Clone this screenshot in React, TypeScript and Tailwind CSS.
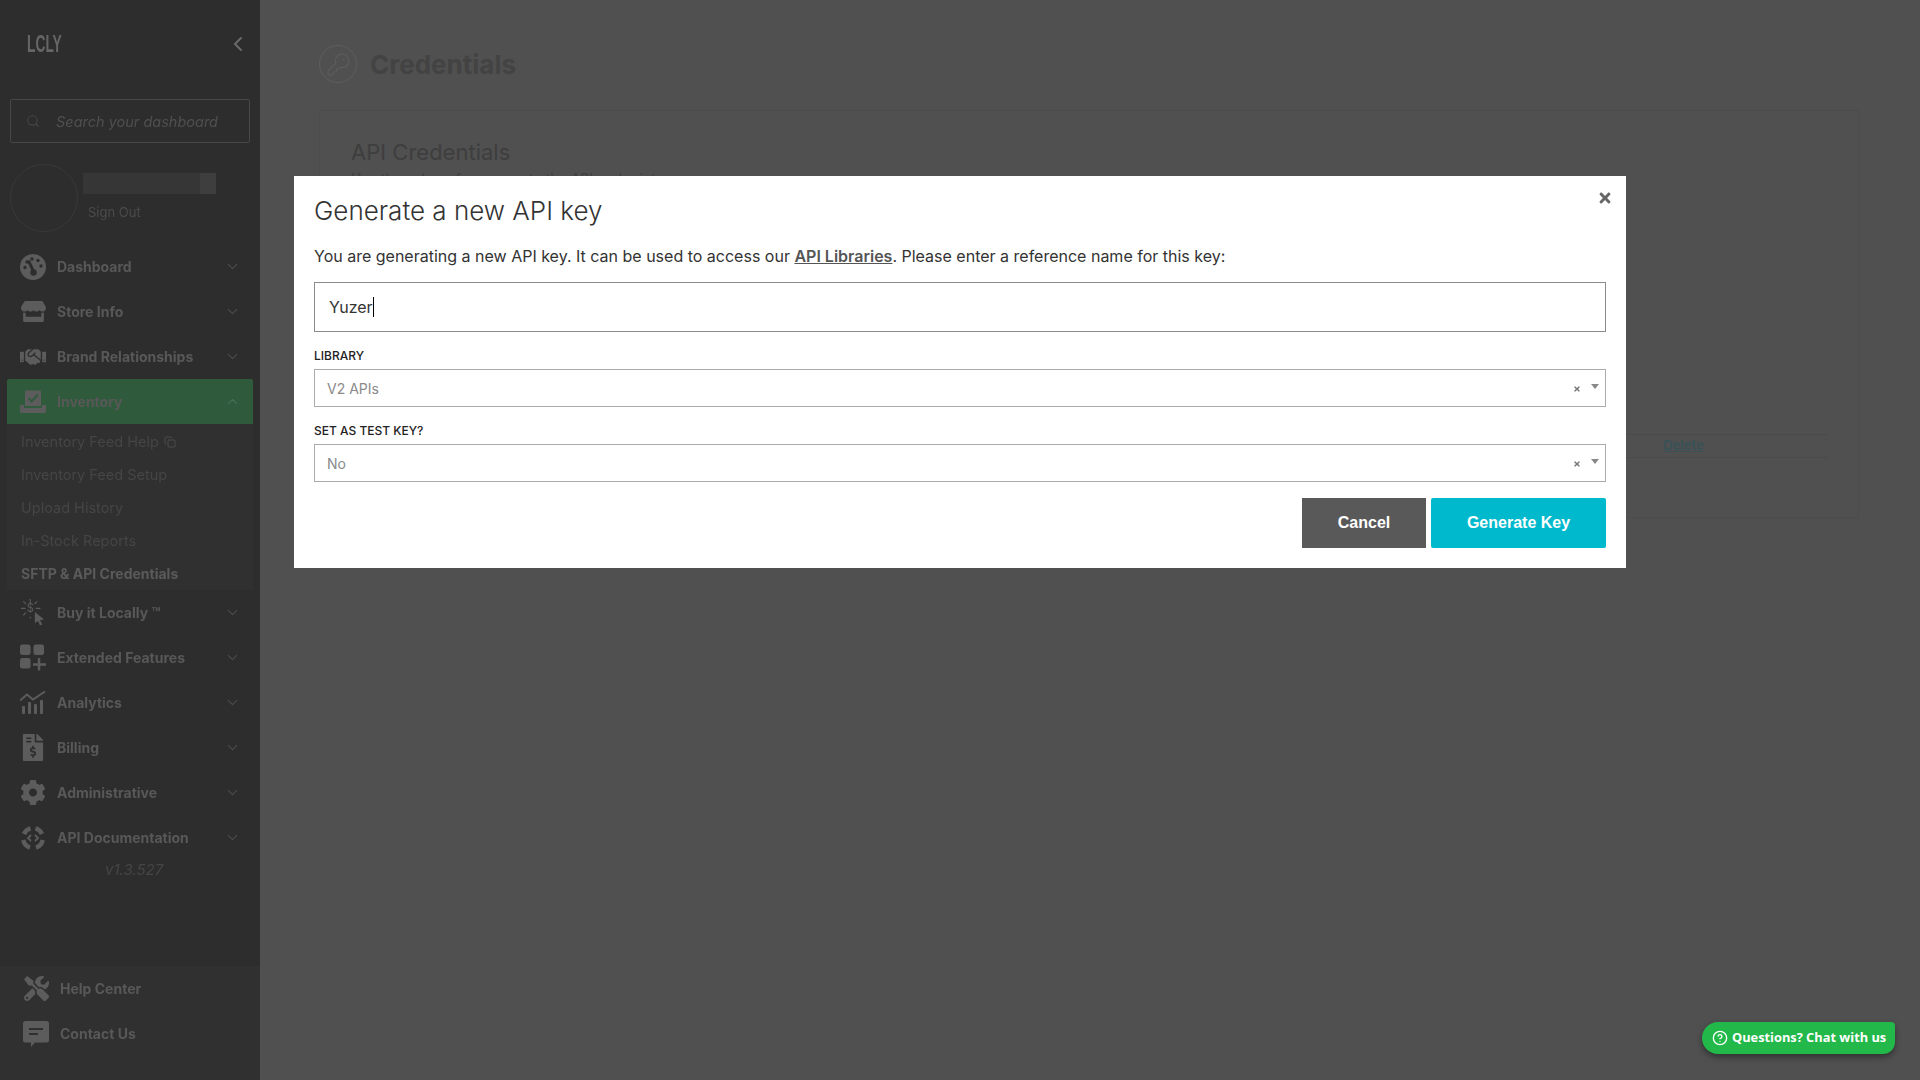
import React from "react";
import { ChevronDown, ChevronUp, ChevronLeft, Search, KeyRound, CircleHelp, Copy } from "lucide-react";
import { FaStore, FaHandshake, FaFileInvoiceDollar, FaCog, FaTools, FaTimes } from "react-icons/fa";

const iconColor = "#5c5c5c";

function GaugeIcon() {
  return (
    <svg width="26" height="26" viewBox="0 0 26 26">
      <circle cx="13" cy="13" r="13" fill={iconColor} />
      <circle cx="7" cy="8" r="1.7" fill="#2d2d2d" />
      <circle cx="12" cy="5" r="1.7" fill="#2d2d2d" />
      <circle cx="18" cy="6.5" r="1.7" fill="#2d2d2d" />
      <circle cx="21" cy="12" r="1.7" fill="#2d2d2d" />
      <circle cx="5" cy="13.5" r="1.7" fill="#2d2d2d" />
      <path d="M8.5 6.5l4.5 10" stroke="#2d2d2d" strokeWidth="3" />
      <circle cx="13.5" cy="18.5" r="3.2" fill="#2d2d2d" />
    </svg>
  );
}

function ContactIcon() {
  return (
    <svg width="26" height="26" viewBox="0 0 26 26" fill={iconColor}>
      <path d="M2.5 0h21A2.5 2.5 0 0 1 26 2.5V19a2.5 2.5 0 0 1-2.5 2.5H12L8 26v-4.500H2.500A2.500 2.500 0 0 1 0 19V2.500A2.500 2.500 0 0 1 2.500 0z" />
      <path d="M6 8h14M6 13h9" stroke="#303030" strokeWidth="2" />
    </svg>
  );
}

function InventoryIcon() {
  return (
    <svg width="26" height="24" viewBox="0 0 26 24" fill={iconColor}>
      <path d="M5 1.500a1 1 0 0 1 1-1h14a1 1 0 0 1 1 1V16H5z" />
      <path d="M8.500 8l3.200 3.400L18 4.500" stroke="#2f5a3c" strokeWidth="2" fill="none" />
      <path d="M0 15h4v3h18v-3h4v6.500a1.500 1.500 0 0 1-1.500 1.500h-23A1.500 1.500 0 0 1 0 21.500z" />
    </svg>
  );
}

function BuyIcon() {
  return (
    <svg width="28" height="32" viewBox="0 0 28 32" fill="none" stroke={iconColor} strokeWidth="1.2">
      <path d="M11 1v5M11 20v2M1 11h5M17 11h5M3.500 3.500l3 3M18.500 3.500l-3 3M3.500 18.500l3-3" />
      <text x="11" y="15" textAnchor="middle" fontSize="12" fontFamily="Inter, sans-serif" fill={iconColor} stroke="none">$</text>
      <path d="M16 15l10 8-4.500 .5 2.500 5-2.500 1-2-5L16 27z" fill={iconColor} stroke="none" />
    </svg>
  );
}

function ExtendedIcon() {
  return (
    <svg width="27" height="27" viewBox="0 0 27 27" fill={iconColor}>
      <rect x="0" y="0" width="11" height="11" rx="2.500" />
      <rect x="14" y="0" width="11" height="11" rx="2.500" />
      <rect x="0" y="14" width="11" height="11" rx="2.500" />
      <path d="M18.500 14h2.500v5.500h6V22h-6v5h-2.500v-5h-5v-2.500h5z" />
    </svg>
  );
}

function AnalyticsIcon() {
  return (
    <svg width="26" height="24" viewBox="0 0 26 24" fill={iconColor}>
      <path d="M0 9.500l7-6 6 5 12-8" stroke={iconColor} strokeWidth="2" fill="none" />
      <rect x="2" y="15" width="3" height="8" rx="1" />
      <rect x="8" y="11" width="3" height="12" rx="1" />
      <rect x="14" y="13" width="3" height="10" rx="1" />
      <rect x="20" y="9" width="3" height="14" rx="1" />
    </svg>
  );
}

function ApiIcon() {
  return (
    <svg width="26" height="26" viewBox="0 0 26 26" fill="none" stroke={iconColor}>
      <path d="M4 9A10 10 0 0 1 10.500 3.300M15.500 3.300A10 10 0 0 1 22 9M22.700 15A10 10 0 0 1 16 22.600M10 22.600A10 10 0 0 1 3.300 15" strokeWidth="4.500" />
      <path d="M11 10l-3 3 3 3M15 10l3 3-3 3" strokeWidth="1.800" />
    </svg>
  );
}

const topNav = [
  { label: "Dashboard", icon: <GaugeIcon /> },
  { label: "Store Info", icon: <FaStore size={25} color={iconColor} /> },
  { label: "Brand Relationships", icon: <FaHandshake size={26} color={iconColor} /> },
];

const lowerNav = [
  { label: "Buy it Locally ™", icon: <BuyIcon /> },
  { label: "Extended Features", icon: <ExtendedIcon /> },
  { label: "Analytics", icon: <AnalyticsIcon /> },
  { label: "Billing", icon: <FaFileInvoiceDollar size={27} color={iconColor} /> },
  { label: "Administrative", icon: <FaCog size={27} color={iconColor} /> },
  { label: "API Documentation", icon: <ApiIcon /> },
];

function NavItem({ label, icon }: { label: string; icon: React.ReactNode }) {
  return (
    <div className="flex h-[45px] items-center pr-[16px] pl-[20px]">
      <div className="flex w-[26px] shrink-0 justify-center">{icon}</div>
      <span className="mb-[1px] ml-[11px] flex-1 text-[14px] font-bold text-[#585858]">{label}</span>
      <ChevronDown size={17} color="#4d4d4d" strokeWidth={1.5} className="mr-[3px]" />
    </div>
  );
}

function SelectRow({ label, value }: { label: string; value: string }) {
  return (
    <div>
      <div className="text-[12px] leading-[16px] font-medium text-[#222]">{label}</div>
      <div className="mt-[5px] flex h-[38px] items-center border border-[#ababab] pr-[6px] pl-[12px] text-[14px] text-[#8a8a8a]">
        <span className="flex-1">{value}</span>
        <FaTimes size={8} color="#777" className="mt-[2px] mr-[10px]" />
        <span className="mb-[3px] h-0 w-0 border-x-[4px] border-t-[5px] border-x-transparent border-t-[#888]" />
      </div>
    </div>
  );
}

export default function App() {
  return (
    <div className="relative flex h-screen w-full overflow-hidden bg-[#505050] font-[Inter,sans-serif]">
      <aside className="flex h-full w-[260px] shrink-0 flex-col bg-[#2d2d2d] blur-[0.3px]">
        <div className="flex h-[88px] items-center pr-[10px] pl-[27px]">
          <span className="w-[34px] origin-left scale-x-[0.6] font-['Liberation_Sans',sans-serif] text-[23px] font-bold whitespace-nowrap text-[#666]">LCLY</span>
          <ChevronLeft size={24} color="#6a6a6a" strokeWidth={2} className="ml-auto" />
        </div>
        <div className="mx-[10px] mt-[11px] flex h-[44px] items-center rounded-[2px] border border-[#484848] pl-[15px]">
          <Search size={14} color="#444" />
          <span className="mt-[1px] ml-[16px] text-[14.5px] text-[#4f4f4f] italic">Search your dashboard</span>
        </div>
        <div className="mx-[10px] mt-[21px] flex h-[68px] items-start">
          <div className="h-[68px] w-[68px] rounded-full border border-[#383838]" />
          <div className="ml-[5px] pt-[9px]">
            <div className="flex h-[21px] w-[133px] bg-[#363636]">
              <div className="ml-auto h-full w-[16px] bg-[#3e3e3e]" />
            </div>
            <div className="mt-[10px] ml-[5px] text-[13px] leading-[16px] text-[#4b4b4b]">Sign Out</div>
          </div>
        </div>
        <nav className="mt-[12px] flex flex-col">
          {topNav.map((n) => (
            <NavItem key={n.label} label={n.label} icon={n.icon} />
          ))}
          <div className="mx-[7px] flex h-[45px] items-center rounded-t-[2px] bg-[#2f5a3c] pr-[9px] pl-[13px]">
            <div className="flex w-[26px] shrink-0 justify-center"><InventoryIcon /></div>
            <span className="mb-[1px] ml-[11px] flex-1 text-[14px] font-bold text-[#585858]">Inventory</span>
            <ChevronUp size={17} color="#4d6e57" strokeWidth={1.5} className="mr-[3px]" />
          </div>
          <div className="mx-[7px] flex h-[166px] flex-col bg-[#303030] pt-[1px] pl-[14px] text-[14.5px] text-[#454545]">
            <div className="flex h-[33px] items-center gap-[5px]">Inventory Feed Help <Copy size={12} color="#4b4b4b" /></div>
            <div className="flex h-[33px] items-center">Inventory Feed Setup</div>
            <div className="flex h-[33px] items-center">Upload History</div>
            <div className="flex h-[33px] items-center">In-Stock Reports</div>
            <div className="flex h-[33px] items-center text-[14px] font-bold text-[#5a5a5a]">SFTP &amp; API Credentials</div>
          </div>
          {lowerNav.map((n) => (
            <NavItem key={n.label} label={n.label} icon={n.icon} />
          ))}
        </nav>
        <div className="h-[20px] pl-[105px] text-[15px] leading-[20px] text-[#454545] italic">v1.3.527</div>
        <div className="mt-auto h-[114px] bg-[#303030]">
          <div className="flex h-[45px] items-center pl-[23px]">
            <div className="flex w-[26px] justify-center"><FaTools size={25} color={iconColor} /></div>
            <span className="ml-[11px] text-[14px] font-bold text-[#585858]">Help Center</span>
          </div>
          <div className="flex h-[45px] items-center pl-[23px]">
            <div className="flex w-[26px] justify-center"><ContactIcon /></div>
            <span className="ml-[11px] text-[14px] font-bold text-[#585858]">Contact Us</span>
          </div>
        </div>
      </aside>

      <main className="flex-1 pt-[45px] pl-[59px]">
        <div className="flex h-[38px] items-center">
          <div className="flex h-[38px] w-[38px] items-center justify-center rounded-full border border-[#5e5e5e]">
            <KeyRound size={25} color="#5e5e5e" strokeWidth={1} />
          </div>
          <h1 className="ml-[13px] text-[26px] font-bold text-[#434343]">Credentials</h1>
        </div>
        <section className="mt-[27px] flex h-[408px] w-[1540px] flex-col border border-[#4c4c4c] pt-[26px] pr-[30px] pl-[31px]">
          <h2 className="text-[22px] leading-[30px] text-[#3e3e3e]">API Credentials</h2>
          <p className="mt-[1px] text-[14px] text-[#3f3f3f]">Use these keys for access to the API endpoints</p>
          <div className="mt-auto mb-[59px] flex h-[24px] items-center justify-end border-y border-[#4a4a4a] pr-[124px]">
            <span className="text-[13px] font-bold text-[#3a5156] underline">Delete</span>
          </div>
        </section>
      </main>

      <div className="absolute top-[176px] left-[294px] h-[392px] w-[1332px] bg-white px-[20px] pt-[18px]">
        <button className="absolute top-[14px] right-[13px]"><FaTimes size={16} color="#666" /></button>
        <h3 className="text-[26px] leading-[34px] font-light text-[#333]">Generate a new API key</h3>
        <p className="mt-[16px] text-[16px] leading-[24px] text-[#333]">
          You are generating a new API key. It can be used to access our <span className="font-semibold text-[#555] underline">API Libraries</span>. Please enter a reference name for this key:
        </p>
        <div className="mt-[14px] flex h-[50px] items-center border border-[#8a8a8a] pl-[14px] text-[16px] text-[#333]">
          Yuzer<span className="h-[20px] w-px bg-black" />
        </div>
        <div className="mt-[16px]"><SelectRow label="LIBRARY" value="V2 APIs" /></div>
        <div className="mt-[16px]"><SelectRow label="SET AS TEST KEY?" value="No" /></div>
        <div className="mt-[16px] flex justify-end gap-[5px] font-['Liberation_Sans',sans-serif] text-[16px] font-bold text-white">
          <button className="h-[50px] w-[124px] bg-[#595959]">Cancel</button>
          <button className="h-[50px] w-[175px] rounded-[2px] bg-[#00b9cc]">Generate Key</button>
        </div>
      </div>

      <div className="absolute top-[1022px] left-[1702px] flex h-[32px] w-[193px] items-center gap-[4px] rounded-tl-[16px] rounded-tr-[4px] rounded-br-[12px] rounded-bl-[16px] bg-[#22b84a] pl-[10px] font-['Open_Sans',sans-serif] text-[12.8px] font-bold text-white shadow-[0_3px_6px_rgba(0,0,0,0.4)]">
        <CircleHelp size={16} strokeWidth={2} />
        <span>Questions? Chat with us</span>
      </div>
    </div>
  );
}
